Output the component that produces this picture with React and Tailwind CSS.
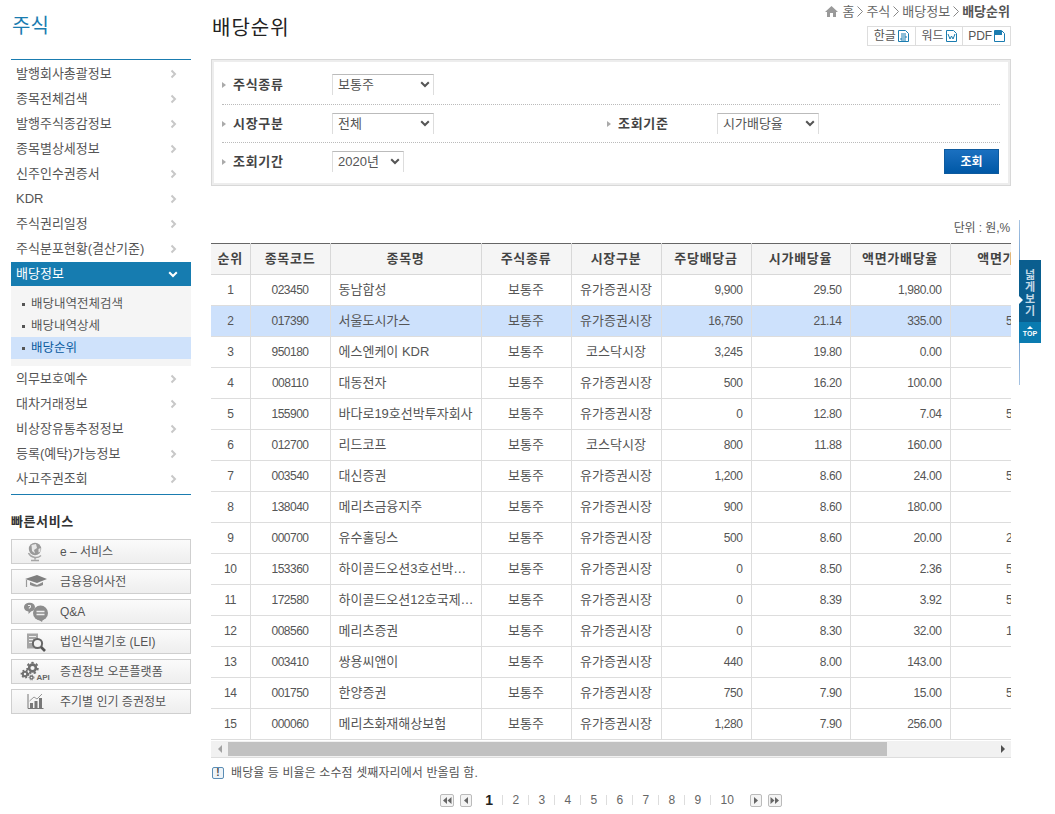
import React from "react";

const font = { fontFamily: '"Liberation Sans","Noto Sans CJK KR",sans-serif' };

const rows = [
  ["1","023450","동남합성","보통주","유가증권시장","9,900","29.50","1,980.00","500"],
  ["2","017390","서울도시가스","보통주","유가증권시장","16,750","21.14","335.00","5,000"],
  ["3","950180","에스엔케이 KDR","보통주","코스닥시장","3,245","19.80","0.00","0"],
  ["4","008110","대동전자","보통주","유가증권시장","500","16.20","100.00","500"],
  ["5","155900","바다로19호선박투자회사","보통주","유가증권시장","0","12.80","7.04","5,000"],
  ["6","012700","리드코프","보통주","코스닥시장","800","11.88","160.00","500"],
  ["7","003540","대신증권","보통주","유가증권시장","1,200","8.60","24.00","5,000"],
  ["8","138040","메리츠금융지주","보통주","유가증권시장","900","8.60","180.00","500"],
  ["9","000700","유수홀딩스","보통주","유가증권시장","500","8.60","20.00","2,500"],
  ["10","153360","하이골드오션3호선박…","보통주","유가증권시장","0","8.50","2.36","5,000"],
  ["11","172580","하이골드오션12호국제…","보통주","유가증권시장","0","8.39","3.92","5,000"],
  ["12","008560","메리츠증권","보통주","유가증권시장","0","8.30","32.00","1,000"],
  ["13","003410","쌍용씨앤이","보통주","유가증권시장","440","8.00","143.00","500"],
  ["14","001750","한양증권","보통주","유가증권시장","750","7.90","15.00","5,000"],
  ["15","000060","메리츠화재해상보험","보통주","유가증권시장","1,280","7.90","256.00","500"],
];
const heads = ["순위","종목코드","종목명","주식종류","시장구분","주당배당금","시가배당율","액면가배당율","액면가"];

const Chevron = ({ color = "#c8c8c8" }) => (
  <svg width="7" height="10" viewBox="0 0 7 10"><path d="M1.5 1.5 L5 5 L1.5 8.5" fill="none" stroke={color} strokeWidth="2" /></svg>
);
const Down = ({ color = "#fff", w = 10 }) => (
  <svg width={w} height="7" viewBox="0 0 10 7"><path d="M1.2 1.2 L5 5 L8.8 1.2" fill="none" stroke={color} strokeWidth="2" /></svg>
);
const Crumb = () => (
  <svg width="6" height="11" viewBox="0 0 6 11"><path d="M0.5 0.5 L5.5 5.5 L0.5 10.5" fill="none" stroke="#888"/></svg>
);

const menu1 = ["발행회사총괄정보","종목전체검색","발행주식종감정보","종목별상세정보","신주인수권증서","KDR","주식권리일정","주식분포현황(결산기준)"];
const menu2 = ["의무보호예수","대차거래정보","비상장유통추정정보","등록(예탁)가능정보","사고주권조회"];

const MenuItem = ({ t }) => (
  <div className="h-[25px] flex items-center justify-between pl-[5px] pr-[14px] text-[13px] text-[#555]">
    <span>{t}</span><Chevron />
  </div>
);

const Gear = ({ cx, cy, r, w }) => (
  <g fill="none" stroke="#6f6f6f">
    <circle cx={cx} cy={cy} r={r} strokeWidth={w} />
    <circle cx={cx} cy={cy} r={r + w * 0.75} strokeWidth={w * 0.7} strokeDasharray={`${w * 0.9} ${w * 0.9}`} />
  </g>
);

const SvcIcons = {
  globe: (
    <svg width="17" height="20" viewBox="0 0 17 20"><circle cx="8" cy="7" r="6.2" fill="#9a9a9a"/><path d="M4.5 3 L9 2 L10 6 L7 8 L8 11.5 L5 9Z M11.5 7 L13.5 6 L13.5 9.5 L11.5 10.5Z" fill="#e8e8e8"/><path d="M1.5 11 A8 8 0 0 0 14 13.5 M8 15 V17.5 M4 18.5 H12" fill="none" stroke="#a5a5a5" strokeWidth="1.5"/></svg>
  ),
  cap: (
    <svg width="24" height="16" viewBox="0 0 24 16"><path d="M1 5 L13 1 L23 5 L13 9Z" fill="#7f7f7f"/><path d="M6 8 L13 11 L19 8 V11 Q13 14.5 6 11Z" fill="#8c8c8c"/><path d="M2.5 6 V13" stroke="#999" strokeWidth="1.2"/></svg>
  ),
  qa: (
    <svg width="26" height="20" viewBox="0 0 26 20"><path d="M1 5.5 A5.5 4.5 0 1 1 8 9.5 L5.5 12 V9.5 A5.5 4.5 0 0 1 1 5.5Z" fill="#8d8d8d"/><circle cx="17.5" cy="11" r="7.5" fill="#8d8d8d"/><path d="M13.5 9.5 H21.5 M13.5 12.5 H21.5" stroke="#eee" strokeWidth="1.4"/><path d="M16 18 L19 20 L20 17Z" fill="#8d8d8d"/><path d="M5 3.5 H7.5 V5.5 H6.3 V6.7" fill="none" stroke="#eee" strokeWidth="1"/></svg>
  ),
  lei: (
    <svg width="20" height="20" viewBox="0 0 20 20"><rect x="1" y="1.5" width="11" height="15" fill="#a5a5a5"/><path d="M3 4.5H10M3 7.5H7M3 10.5H6" stroke="#eee" strokeWidth="1"/><circle cx="11.5" cy="11.5" r="4.6" fill="#f2f2f2" stroke="#666" strokeWidth="2"/><path d="M15 15 L19 19" stroke="#555" strokeWidth="2.6"/></svg>
  ),
  api: (
    <svg width="32" height="22" viewBox="0 0 32 22">
      <Gear cx={5} cy={13} r={2.2} w={2} />
      <Gear cx={12.5} cy={7} r={3.4} w={2.6} />
      <Gear cx={11.5} cy={16.5} r={1.5} w={1.3} />
      <text x="16.5" y="19" fontSize="8" fontWeight="700" fill="#666" fontFamily="Liberation Sans">API</text>
    </svg>
  ),
  chart: (
    <svg width="17" height="17" viewBox="0 0 17 17"><path d="M1 1 V15.5 H16.5" fill="none" stroke="#777" strokeWidth="1"/><rect x="3" y="10" width="3" height="5" fill="#777"/><rect x="7.5" y="8" width="3" height="7" fill="#777"/><rect x="12" y="5" width="3" height="10" fill="#777"/><path d="M2.5 8 L7 4 L10 6 L15 1" fill="none" stroke="#999" strokeWidth="1"/></svg>
  ),
};

const services = [
  ["globe","e – 서비스"],["cap","금융용어사전"],["qa","Q&A"],["lei","법인식별기호 (LEI)"],["api","증권정보 오픈플랫폼"],["chart","주기별 인기 증권정보"],
];

const Select = ({ w, t }) => (
  <div className="h-[21px] border-t border-l border-r border-t-[#bbb] border-x-[#ddd] flex items-center justify-between pl-[5px] pr-[2px] text-[13px] text-[#555] pb-[1px] bg-white" style={{ width: w }}>
    <span>{t}</span><span className="mr-[1px]"><Down color="#555" /></span>
  </div>
);

const Label = ({ t }) => (
  <div className="flex items-center w-[110px] shrink-0">
    <span className="w-0 h-0 border-y-[3px] border-y-transparent border-l-[4px] border-l-[#aaa] mr-[7px]" />
    <span className="text-[13px] font-bold text-[#444] tracking-[0.7px]">{t}</span>
  </div>
);

const PagerBtn = ({ d, w = 13 }) => (
  <span className="h-[13px] border border-[#bbb] rounded-[2px] bg-[#f4f4f4] flex items-center justify-center" style={{ width: w }}>
    <svg width="9" height="7" viewBox="0 0 9 7"><path d={d} fill="#666" /></svg>
  </span>
);

const colW = [39,80,151,90,90,90,99,100,92];

export default function App() {
  return (
    <div style={font} className="w-[1055px] h-[814px] overflow-hidden bg-white relative">
      <div className="flex items-start pl-[11px]">
        {/* sidebar */}
        <aside className="w-[180px] shrink-0">
          <h1 className="text-[20px] leading-[24px] font-normal text-[#1a7cb0] pt-[14px] pl-[1px] h-[59px]">주식</h1>
          <div className="border-t border-[#1a7cb0] pt-[1px] border-b pb-[3px]">
            {menu1.map((t) => <MenuItem key={t} t={t} />)}
            <div className="h-[24px] bg-[#167cb0] flex items-center justify-between pl-[5px] pr-[13px] text-[13px] text-white mt-[1px]">
              <span>배당정보</span><Down />
            </div>
            <div className="bg-[#f5f5f5] pt-[7px] h-[80px]">
              {["배당내역전체검색","배당내역상세","배당순위"].map((t, i) => (
                <div key={t} className={`h-[22px] flex items-center pl-[11px] text-[12.5px] ${i === 2 ? "bg-[#cfe2fb] text-[#0a5a9e]" : "text-[#555]"}`}>
                  <span className="w-[3px] h-[3px] bg-[#555] mr-[6px]" />{t}
                </div>
              ))}
            </div>
            {menu2.map((t) => <MenuItem key={t} t={t} />)}
          </div>
          <div className="text-[13px] font-bold text-[#333] tracking-[0.6px] mt-[18px] mb-[7px] h-[19px] leading-[18px]">빠른서비스</div>
          <div className="flex flex-col gap-[5px]">
            {services.map(([ic, t]) => (
              <div key={t} className="h-[25px] border border-[#cfcfcf] bg-gradient-to-b from-[#fbfbfb] to-[#eeeeee] flex items-center text-[12px] text-[#555]">
                <span className="w-[47px] mr-[1px] shrink-0 flex justify-center">{SvcIcons[ic]}</span>
                <span className="pt-[1px]">{t}</span>
              </div>
            ))}
          </div>
        </aside>

        {/* main */}
        <main className="w-[800px] ml-[20px] shrink-0">
          <div className="h-[59px] flex justify-between">
            <h2 className="text-[20px] leading-[26px] font-normal text-[#222] pt-[15px] pl-[1px] tracking-[1px]">배당순위</h2>
            <div className="flex flex-col items-end pt-[4px] pr-[1px]">
              <div className="flex items-center gap-[3px] text-[13px] h-[15px] text-[#666]">
                <svg width="15" height="13" viewBox="0 0 15 13"><path d="M7.5 1 L14 7 H12 V12 H9 V8 H6 V12 H3 V7 H1Z" fill="#9a9a9a"/></svg>
                <span>홈</span><Crumb />
                <span>주식</span><Crumb />
                <span>배당정보</span><Crumb />
                <b className="text-[#555]">배당순위</b>
              </div>
              <div className="mt-[7px] mr-[-1px] flex w-[144px] h-[20px] border border-[#ddd] text-[12px] text-[#555]">
                {[["한글","e"],["워드","w"],["PDF","p"]].map(([t, k], i) => (
                  <div key={t} className={`flex-1 flex items-center justify-center gap-[2px] ${i < 2 ? "border-r border-[#ddd]" : ""}`}>
                    <span>{t}</span>
                    <svg width="11" height="12" viewBox="0 0 11 12">
                      <path d="M0.5 0.5 H7.5 L10.5 3.5 V11.5 H0.5Z" fill="#fff" stroke="#1a7cb0"/>
                      {k === "e" && <path d="M3 4 H8 M3 6 H8 V8 H3 V10 H8" fill="none" stroke="#1a7cb0"/>}
                      {k === "w" && <path d="M2 4 L4 9 L5.5 6 L7 9 L9 4" fill="none" stroke="#1a7cb0"/>}
                      {k === "p" && <rect x="1" y="1" width="7" height="4" fill="#1a7cb0"/>}
                    </svg>
                  </div>
                ))}
              </div>
            </div>
          </div>

          {/* filter */}
          <div className="h-[127px] border border-[#d8d8d8] bg-[#ededed] p-[2px]">
            <div className="bg-white h-full px-[8px] flex flex-col">
              <div className="h-[43px] border-b border-dotted border-[#bbb] flex items-center pt-[3px]">
                <Label t="주식종류" /><Select w={102} t="보통주" />
              </div>
              <div className="h-[38px] border-b border-dotted border-[#bbb] flex items-center">
                <Label t="시장구분" /><Select w={102} t="전체" />
                <div className="w-[173px] shrink-0" />
                <Label t="조회기준" /><Select w={102} t="시가배당율" />
              </div>
              <div className="flex-1 flex items-center pr-[1px] pb-[3px]">
                <Label t="조회기간" /><Select w={72} t="2020년" />
                <button className="ml-auto w-[55px] h-[25px] border border-[#0d5a9e] bg-gradient-to-b from-[#1a70c0] to-[#0058a6] text-white text-[12px] font-bold">조회</button>
              </div>
            </div>
          </div>

          <div className="text-right text-[12px] text-[#555] mt-[34px] h-[23px] leading-[16px] pr-[1px] tracking-[-0.1px]">단위 : 원,%</div>

          {/* table */}
          <div className="w-[800px] overflow-hidden">
            <table className="table-fixed border-collapse w-[831px] text-[13px] text-[#555]">
              <colgroup>{colW.map((w, i) => <col key={i} style={{ width: w }} />)}</colgroup>
              <thead>
                <tr className="h-[31px] bg-[#f5f5f5] border-t border-[#666]">
                  {heads.map((h, i) => (
                    <th key={h} className={`font-bold text-[13px] text-[#444] tracking-[0.7px] border-b border-[#d8d8d8] p-0 whitespace-nowrap ${i ? "border-l" : ""}`}>{h}</th>
                  ))}
                </tr>
              </thead>
              <tbody>
                {rows.map((r, ri) => (
                  <tr key={ri} className={`h-[31px] ${ri === 1 ? "bg-[#cde1fc]" : ""}`}>
                    {r.map((c, i) => {
                      const right = i >= 5;
                      const cls = i === 2
                        ? "text-left pl-[8px]"
                        : right
                          ? "text-right pr-[8px] text-[12px] tracking-[-0.4px]"
                          : i < 2
                            ? "text-center text-[12px] tracking-[-0.5px]"
                            : "text-center";
                      return (
                        <td key={i} className={`p-0 border-b border-[#ddd] whitespace-nowrap overflow-hidden ${i ? "border-l" : ""} ${cls}`}>{c}</td>
                      );
                    })}
                  </tr>
                ))}
              </tbody>
            </table>
          </div>

          {/* scrollbar */}
          <div className="h-[17px] mt-[1px] bg-[#f1f1f1] flex items-center border-b border-[#ddd]">
            <span className="w-[17px] flex justify-center"><span className="w-0 h-0 border-y-[4px] border-y-transparent border-r-[4px] border-r-[#a3a3a3]" /></span>
            <div className="h-full flex-1">
              <div className="w-[659px] h-[14px] mt-[1px] bg-[#c1c1c1]" />
            </div>
            <span className="w-[17px] flex justify-center"><span className="w-0 h-0 border-y-[4px] border-y-transparent border-l-[4px] border-l-[#505050]" /></span>
          </div>

          <div className="flex items-center mt-[8px] text-[12px] text-[#555] tracking-[0.1px] h-[14px]">
            <span className="w-[12px] h-[12px] border border-[#5b8db5] rounded-[2px] bg-[#eef3f7] flex items-center justify-center text-[10px] font-bold leading-none text-[#444] ml-[1px] mr-[7px]">!</span>
            배당율 등 비율은 소수점 셋째자리에서 반올림 함.
          </div>

          <div className="flex items-center justify-center mt-[13px] h-[14px] text-[12px] text-[#666]">
            <div className="flex items-center gap-[6px] mr-[13px]">
              <PagerBtn d="M4 0 L0 3.5 L4 7Z M8.5 0 L4.5 3.5 L8.5 7Z" w={14} />
              <PagerBtn d="M6 0 L2 3.5 L6 7Z" w={12} />
            </div>
            <b className="text-[14px] text-[#222] w-[8px] text-center">1</b>
            {[2,3,4,5,6,7,8,9,10].map((n) => (
              <React.Fragment key={n}>
                <span className="w-px h-[10px] bg-[#ddd] ml-[9px] mr-[9.33px]" />
                <span>{n}</span>
              </React.Fragment>
            ))}
            <div className="flex items-center gap-[6px] ml-[16px]">
              <PagerBtn d="M3 0 L7 3.5 L3 7Z" w={12} />
              <PagerBtn d="M0.5 0 L4.5 3.5 L0.5 7Z M5 0 L9 3.5 L5 7Z" w={14} />
            </div>
          </div>
        </main>
      </div>

      {/* side tab */}
      <div className="absolute left-[1019px] top-[220px] h-[165px] w-[1px] bg-gradient-to-b from-[#a8c4e2] via-[#3f7fc0] to-[#a8c4e2]" />
      <div className="absolute left-[1019px] top-[260px] w-[22px]">
        <div className="h-[62px] bg-[#0a5e8f] text-[#c2d8e6] text-[11px] font-bold leading-[12px] text-center pt-[9px] flex flex-col items-center relative">
          <span>넓</span><span>게</span><span>보</span><span>기</span>
          <span className="absolute left-0 top-[36px] w-0 h-0 border-y-[4px] border-y-transparent border-l-[4px] border-l-white" />
        </div>
        <div className="h-[21px] bg-[#0a7bb0] text-white text-[7px] font-bold text-center leading-[8px] pt-[4px]">
          <div className="w-0 h-0 mx-auto border-x-[3px] border-x-transparent border-b-[3px] border-b-white mb-[1px]" />
          TOP
        </div>
      </div>
    </div>
  );
}
